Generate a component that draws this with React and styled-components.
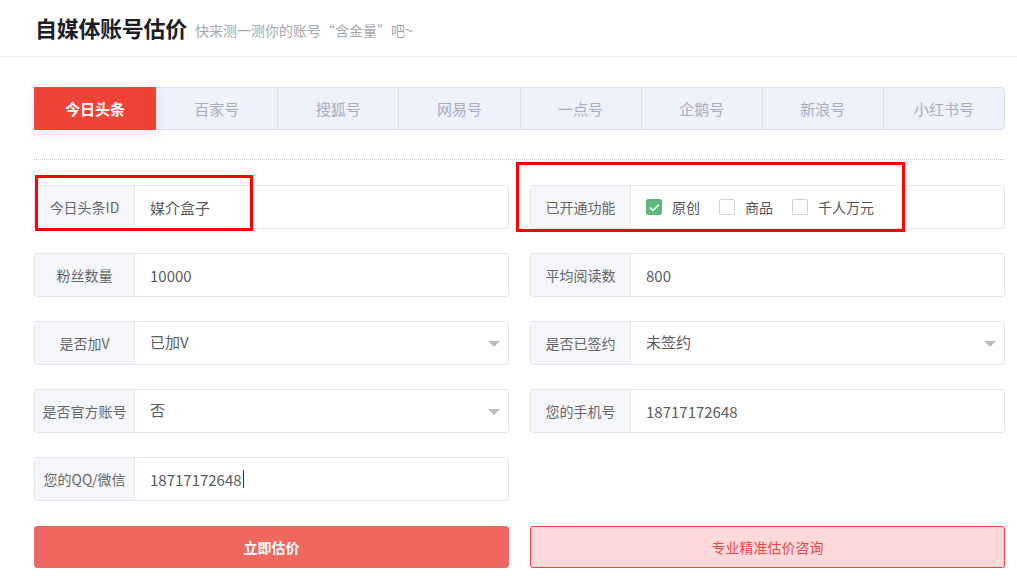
import styled, { createGlobalStyle } from "styled-components";

const GlobalStyle = createGlobalStyle`
  html, body {
    margin: 0;
    padding: 0;
    background: #fff;
    font-family: "Noto Sans CJK SC", "Noto Sans", sans-serif;
  }
  * {
    box-sizing: border-box;
  }
`;

const Page = styled.div`
  width: 1017px;
  padding-bottom: 11px;
`;

const Header = styled.div`
  height: 57px;
  border-bottom: 1px solid #eee;
  display: flex;
  align-items: center;
  padding: 0 0 2px 35px;
`;

const Title = styled.h1`
  margin: 0;
  font-size: 22px;
  font-weight: 700;
  color: #1e1e28;
  letter-spacing: -0.3px;
`;

const Subtitle = styled.span`
  margin: 5px 0 0 8px;
  font-size: 14px;
  color: #a8a8a8;
`;

const Body = styled.div`
  padding: 0 12px 0 34px;
`;

const Tabs = styled.div`
  margin-top: 30px;
  height: 43px;
  display: grid;
  grid-template-columns: repeat(8, 1fr);
  border: 1px solid #d9ddee;
  border-radius: 4px;
  background: #eef2fa;
`;

const Tab = styled.div`
  display: flex;
  align-items: center;
  justify-content: center;
  font-size: 15px;
  color: ${({ active }) => (active ? "#fff" : "#a9acbf")};
  font-weight: ${({ active }) => (active ? 700 : 400)};
  background: ${({ active }) => (active ? "#ef4338" : "transparent")};
  box-shadow: ${({ active }) =>
    active ? "0 4px 10px rgba(120, 130, 220, 0.18)" : "none"};
  margin: ${({ active }) => (active ? "-1px 0 -1px -1px" : "0")};
  border-left: ${({ first }) => (first ? "none" : "1px solid #d9ddee")};
  position: relative;
  z-index: ${({ active }) => (active ? 1 : 0)};
`;

const Divider = styled.div`
  margin-top: 29px;
  border-top: 1px dotted #c8c8c8;
`;

const Form = styled.div`
  position: relative;
  margin-top: 25px;
  display: grid;
  grid-template-columns: 1fr 1fr;
  column-gap: 21px;
  row-gap: 24px;
`;

const Field = styled.div`
  height: 44px;
  display: flex;
  border: 1px solid #e3e4ee;
  border-radius: 3px;
  overflow: hidden;
  position: relative;
`;

const Label = styled.div`
  width: 100px;
  flex: none;
  display: flex;
  align-items: center;
  justify-content: center;
  background: #f5f6fa;
  border-right: 1px solid #e3e4ee;
  font-size: 14px;
  color: #666;
  white-space: nowrap;
`;

const Value = styled.div`
  flex: 1;
  display: flex;
  align-items: center;
  padding: 0 15px;
  font-size: 15px;
  color: #5a5a60;
  margin-top: ${({ select }) => (select ? "-3px" : "0")};
`;

const Caret = styled.span`
  display: inline-block;
  width: 1px;
  height: 18px;
  background: #333;
  margin-left: 1px;
`;

const Arrow = styled.span`
  position: absolute;
  right: 8px;
  top: 19px;
  width: 0;
  height: 0;
  border-left: 6px solid transparent;
  border-right: 6px solid transparent;
  border-top: 6px solid #bcbcbc;
`;

const CheckGroup = styled.div`
  flex: 1;
  display: flex;
  align-items: center;
  padding-left: 15px;
  gap: 19px;
  font-size: 14px;
  color: #555;
`;

const CheckItem = styled.label`
  display: flex;
  align-items: center;
  gap: 10px;
`;

const Box = styled.span`
  width: 16px;
  height: 16px;
  border-radius: 2px;
  border: 1px solid ${({ checked }) => (checked ? "#5db87a" : "#d5d5d5")};
  background: ${({ checked }) => (checked ? "#5db87a" : "#fff")};
  display: flex;
  align-items: center;
  justify-content: center;
`;

const Mark = styled.span`
  position: absolute;
  border: 3px solid #ff0000;
  pointer-events: none;
`;

const Buttons = styled.div`
  margin-top: 25px;
  display: grid;
  grid-template-columns: 1fr 1fr;
  column-gap: 21px;
`;

const Button = styled.button`
  height: 42px;
  border-radius: 3px;
  font-family: inherit;
  font-size: 14px;
  cursor: pointer;
  border: 1px solid ${({ light }) => (light ? "#ef4338" : "#f0675f")};
  background: ${({ light }) => (light ? "#fdd9db" : "#f0675f")};
  color: ${({ light }) => (light ? "#e84a45" : "#fff")};
  font-weight: ${({ light }) => (light ? 400 : 700)};
`;

const tabs = ["今日头条", "百家号", "搜狐号", "网易号", "一点号", "企鹅号", "新浪号", "小红书号"];

const Check = ({ checked, children }) => (
  <CheckItem>
    <Box checked={checked}>
      {checked && (
        <svg width="11" height="9" viewBox="0 0 11 9">
          <path d="M1 4.5 L4 7.5 L10 1.5" fill="none" stroke="#fff" strokeWidth="1.4" />
        </svg>
      )}
    </Box>
    {children}
  </CheckItem>
);

const TextField = ({ label, value, select, caret }) => (
  <Field>
    <Label>{label}</Label>
    <Value select={select}>
      {value}
      {caret && <Caret />}
    </Value>
    {select && <Arrow />}
  </Field>
);

export default function App() {
  return (
    <Page>
      <GlobalStyle />
      <Header>
        <Title>自媒体账号估价</Title>
        <Subtitle>快来测一测你的账号“含金量”吧~</Subtitle>
      </Header>
      <Body>
        <Tabs>
          {tabs.map((t, i) => (
            <Tab key={t} active={i === 0} first={i === 0 || i === 1}>
              {t}
            </Tab>
          ))}
        </Tabs>
        <Divider />
        <Form>
          <TextField label="今日头条ID" value="媒介盒子" />
          <Field>
            <Label>已开通功能</Label>
            <CheckGroup>
              <Check checked>原创</Check>
              <Check>商品</Check>
              <Check>千人万元</Check>
            </CheckGroup>
          </Field>
          <TextField label="粉丝数量" value="10000" />
          <TextField label="平均阅读数" value="800" />
          <TextField label="是否加V" value="已加V" select />
          <TextField label="是否已签约" value="未签约" select />
          <TextField label="是否官方账号" value="否" select />
          <TextField label="您的手机号" value="18717172648" />
          <TextField label="您的QQ/微信" value="18717172648" caret />
          <div />
          <Mark style={{ left: 1, top: -10, width: 218, height: 56 }} />
          <Mark style={{ left: 482, top: -23, width: 389, height: 70 }} />
        </Form>
        <Buttons>
          <Button>立即估价</Button>
          <Button light>专业精准估价咨询</Button>
        </Buttons>
      </Body>
    </Page>
  );
}
